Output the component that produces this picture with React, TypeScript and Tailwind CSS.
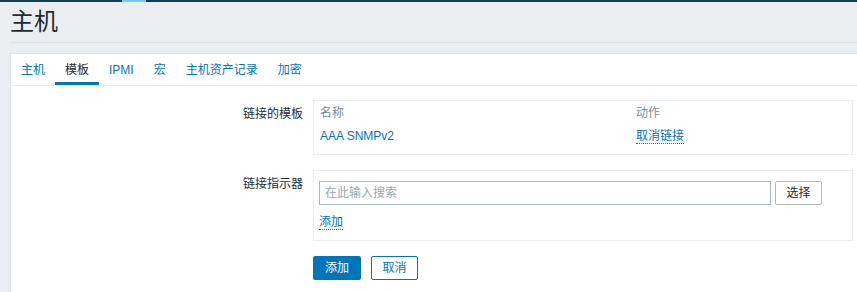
const font = { fontFamily: '"Liberation Sans", "Noto Sans CJK SC", Arial, sans-serif' }

const tabs = ['主机', '模板', 'IPMI', '宏', '主机资产记录', '加密']

export default function App() {
  return (
    <div className="min-h-[292px] bg-[#ebeef0] text-[12px] text-[#1f2c33]" style={font}>
      <div className="relative h-[2px] bg-[#0d3d5e]">
        <div className="absolute left-[122px] top-0 h-[2px] w-[24px] bg-[#7cc5f4]" />
      </div>
      <div className="ml-[10px] border-b border-[#dde2e5] h-[41px] flex items-center">
        <h1 className="text-[24px] leading-none font-normal -mt-[1px]">主机</h1>
      </div>
      <div className="ml-[10px] mt-[10px] bg-white border-l border-t border-[#dfe4e7] pb-[20px]">
        <ul className="flex h-[32px] border-b border-[#ebeef0]">
          {tabs.map((t, i) => (
            <li
              key={t}
              className={
                'relative px-[10px] flex items-center ' +
                (i === 1 ? 'text-[#1f2c33]' : 'text-[#0275b8]')
              }
            >
              {t}
              {i === 1 && <span className="absolute left-0 right-0 bottom-0 h-[3px] bg-[#0275b8]" />}
            </li>
          ))}
        </ul>

        <div className="pt-[14px] flex flex-col gap-[15px] pr-[4px]">
          <div className="flex">
            <div className="w-[292px] text-right pt-[5px]">链接的模板</div>
            <div className="ml-[10px] flex-1 border border-[#ebeef0] px-[6px] pt-[5px] pb-[10px]">
              <div className="flex text-[#768d99] leading-[15px]">
                <div className="w-[316px]">名称</div>
                <div>动作</div>
              </div>
              <div className="flex mt-[8px] leading-[15px]">
                <div className="w-[316px] text-[#0275b8]">AAA SNMPv2</div>
                <div>
                  <span className="text-[#0275b8] border-b border-dotted border-[#0275b8]">取消链接</span>
                </div>
              </div>
            </div>
          </div>

          <div className="flex">
            <div className="w-[292px] text-right pt-[5px]">链接指示器</div>
            <div className="ml-[10px] flex-1 border border-[#ebeef0] px-[5px] pt-[10px] pb-[10px]">
              <div className="flex gap-[4px]">
                <input
                  className="w-[452px] h-[24px] border border-[#acbbc2] px-[5px] outline-none placeholder:text-[#9aa8af]"
                  placeholder="在此输入搜索"
                  style={font}
                />
                <button className="h-[24px] w-[47px] border border-[#acbbc2] rounded-[2px] bg-white text-[#1f2c33]">
                  选择
                </button>
              </div>
              <div className="mt-[10px] leading-[15px]">
                <span className="text-[#0275b8] border-b border-dotted border-[#0275b8]">添加</span>
              </div>
            </div>
          </div>

          <div className="flex gap-[10px] pl-[302px]">
            <button className="h-[24px] w-[48px] rounded-[2px] bg-[#0275b8] text-white">添加</button>
            <button className="h-[24px] w-[47px] rounded-[2px] border border-[#0275b8] bg-white text-[#0275b8]">
              取消
            </button>
          </div>
        </div>
      </div>
    </div>
  )
}
